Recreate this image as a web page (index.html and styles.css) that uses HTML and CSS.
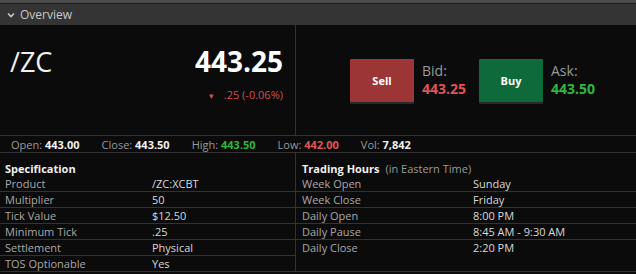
FILE: index.html
```html
<!DOCTYPE html>
<html>
<head>
  <title>Overview</title>
  <link rel="stylesheet" href="styles.css">
</head>
<body>
  <div class="top-strip"></div>
  <div class="section-header">
    <svg class="chevron" width="8" height="6" viewBox="0 0 8 6"><path d="M1 1.5 L4 4.5 L7 1.5" fill="none" stroke="#c8c8c8" stroke-width="1.6"/></svg>
    <span>Overview</span>
  </div>

  <div class="overview">
    <div class="quote">
      <div class="symbol">/ZC</div>
      <div class="price-box">
        <div class="last">443.25</div>
        <div class="change"><span class="arrow">&#9662;</span>.25 (-0.06%)</div>
      </div>
    </div>
    <div class="trade">
      <button class="btn sell">Sell</button>
      <div class="side">
        <div class="side-label">Bid:</div>
        <div class="side-value red">443.25</div>
      </div>
      <button class="btn buy">Buy</button>
      <div class="side">
        <div class="side-label">Ask:</div>
        <div class="side-value green">443.50</div>
      </div>
    </div>
  </div>

  <div class="stats">
    <span>Open: <b>443.00</b></span>
    <span>Close: <b>443.50</b></span>
    <span>High: <b class="green">443.50</b></span>
    <span>Low: <b class="red">442.00</b></span>
    <span>Vol: <b>7,842</b></span>
  </div>

  <div class="details">
    <div class="spec">
      <div class="table-title">Specification</div>
      <div class="row"><span class="label">Product</span><span class="value">/ZC:XCBT</span></div>
      <div class="row"><span class="label">Multiplier</span><span class="value">50</span></div>
      <div class="row"><span class="label">Tick Value</span><span class="value">$12.50</span></div>
      <div class="row"><span class="label">Minimum Tick</span><span class="value">.25</span></div>
      <div class="row"><span class="label">Settlement</span><span class="value">Physical</span></div>
      <div class="row"><span class="label">TOS Optionable</span><span class="value">Yes</span></div>
    </div>
    <div class="hours">
      <div class="table-title">Trading Hours <span class="note">(in Eastern Time)</span></div>
      <div class="row"><span class="label">Week Open</span><span class="value">Sunday</span></div>
      <div class="row"><span class="label">Week Close</span><span class="value">Friday</span></div>
      <div class="row"><span class="label">Daily Open</span><span class="value">8:00 PM</span></div>
      <div class="row"><span class="label">Daily Pause</span><span class="value">8:45 AM - 9:30 AM</span></div>
      <div class="row last-row"><span class="label">Daily Close</span><span class="value">2:20 PM</span></div>
    </div>
  </div>
</body>
</html>
```

FILE: styles.css
```css
body {
  margin: 0;
  background-color: #0b0b0b;
  font-family: "Open Sans", "Liberation Sans", sans-serif;
  color: #c8c8c8;
  width: 636px;
  height: 274px;
  overflow: hidden;
}

.top-strip {
  height: 3px;
  background-color: #4b4b4b;
  border-bottom: 1px solid #1c1c1c;
}

.section-header {
  height: 21px;
  background-color: #343434;
  display: flex;
  align-items: center;
  padding-left: 7px;
  font-size: 12px;
  color: #c8c8c8;
}

.chevron {
  margin-right: 5px;
}

.overview {
  display: flex;
  height: 110px;
  border-bottom: 1px solid #333;
}

.quote {
  width: 273px;
  border-right: 1px solid #333;
  display: flex;
  justify-content: space-between;
  padding: 0 12px 0 10px;
}

.symbol {
  font-size: 27px;
  color: #f0f0f0;
  margin-top: 19px;
  line-height: 36px;
}

.price-box {
  text-align: right;
  margin-top: 18px;
}

.last {
  font-size: 28px;
  font-weight: bold;
  color: #fff;
  line-height: 36px;
}

.change {
  font-size: 11px;
  color: #d05050;
  margin-top: 8px;
}

.arrow {
  font-size: 9px;
  margin-right: 10px;
}

.trade {
  display: flex;
  align-items: center;
  padding-left: 54px;
}

.btn {
  width: 64px;
  height: 43px;
  border: none;
  border-radius: 1px;
  color: #fff;
  font-family: inherit;
  font-size: 11px;
  font-weight: bold;
  box-shadow: 0 2px 0 #2a2a2a;
  padding: 0;
}

.sell {
  background-color: #9c3535;
}

.buy {
  background-color: #0e6a3b;
}

.side {
  width: 57px;
  margin-left: 8px;
  font-size: 14px;
}

.side-label {
  color: #9a9a9a;
  line-height: 18px;
}

.side-value {
  font-weight: bold;
  line-height: 18px;
}

.red {
  color: #e05454;
}

.green {
  color: #2fb83e;
}

.stats {
  display: flex;
  gap: 22px;
  height: 16px;
  padding-left: 11px;
  align-items: center;
  font-size: 11px;
  color: #9a9a9a;
  border-bottom: 1px solid #333;
}

.stats b {
  color: #f0f0f0;
}

.stats b.green {
  color: #2fb83e;
}

.stats b.red {
  color: #e05454;
}

.details {
  display: flex;
}

.spec {
  width: 295px;
  border-right: 1px solid #333;
  border-bottom: 1px solid #333;
}

.hours {
  flex: 1;
  border-bottom: 1px solid #333;
}

.table-title {
  font-size: 11px;
  font-weight: bold;
  color: #f0f0f0;
  padding: 8px 0 0 5px;
  height: 15px;
}

.hours .table-title {
  padding-left: 6px;
}

.note {
  font-weight: normal;
  color: #9a9a9a;
  margin-left: 3px;
}

.row {
  display: flex;
  height: 15px;
  align-items: center;
  font-size: 11px;
  border-bottom: 1px solid #333;
}

.spec .row:last-child {
  border-bottom: none;
}

.hours .last-row {
  border-bottom: none;
}

.label {
  color: #a8a8a8;
  padding-left: 5px;
  width: 147px;
}

.hours .label {
  padding-left: 6px;
  width: 171px;
}

.value {
  color: #d8d8d8;
}
```
